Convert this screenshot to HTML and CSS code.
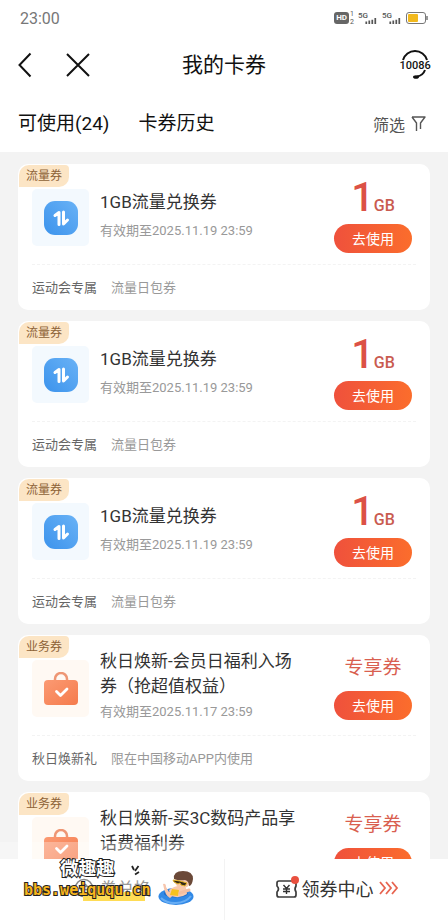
FILE: index.html
```html
<!DOCTYPE html>
<html lang="zh-CN">
<head>
<meta charset="utf-8">
<meta name="viewport" content="width=device-width, initial-scale=1">
<title>我的卡券</title>
<link rel="stylesheet" href="styles.css">
</head>
<body>
<svg class="defs" aria-hidden="true">
  <defs>
    <linearGradient id="blue" x1="1" y1="0" x2="0" y2="1"><stop offset="0" stop-color="#69b2f6"/><stop offset="1" stop-color="#3c93ec"/></linearGradient>
    <linearGradient id="orange" x1="0" y1="0" x2="1" y2="1"><stop offset="0" stop-color="#fb9a73"/><stop offset="1" stop-color="#f57b4c"/></linearGradient>
    <symbol id="data" viewBox="0 0 34 34">
      <rect width="34" height="34" rx="11" fill="url(#blue)"/>
      <path d="M11 14.500 15 11.500v12M19.500 11v12l4-4" fill="none" stroke="#fff" stroke-width="3" stroke-linejoin="round" stroke-linecap="round"/>
    </symbol>
    <symbol id="bag" viewBox="0 0 34 34">
      <path d="M11 9V7a6 6 0 0 1 12 0v2" fill="none" stroke="#ee9674" stroke-width="2.500"/>
      <rect y="8" width="34" height="25" rx="4" fill="url(#orange)"/>
      <path d="m12.500 19.500 4 4 6.500-6.500" fill="none" stroke="#fff" stroke-width="2.800" stroke-linecap="round" stroke-linejoin="round"/>
    </symbol>
    <symbol id="signal" viewBox="0 0 14 7">
      <path d="M1.500 7V4M5 7V3M8.500 7V2M12 7V0" stroke="#555" stroke-width="2"/>
    </symbol>
  </defs>
</svg>
<div class="app">
  <header class="top">
    <div class="status">
      <span class="clock">23:00</span>
      <span class="indicators">
        <span class="hd">HD</span>
        <span class="sims"><span>1</span><span>2</span></span>
        <span class="net"><span>5G</span><svg><use href="#signal"/></svg></span>
        <span class="net"><span>5G</span><svg><use href="#signal"/></svg></span>
        <svg class="battery" viewBox="0 0 22 12"><rect x="0.500" y="0.500" width="19" height="11" rx="2.500" fill="#fff" stroke="#777"/><rect x="2" y="2" width="10" height="8" rx="1" fill="#f2b91d"/><path d="M21 4v4" stroke="#777" stroke-width="1.500"/></svg>
      </span>
    </div>
    <div class="nav">
      <div class="nav-left">
        <button class="icon-btn" aria-label="返回"><svg width="14" height="26" viewBox="0 0 14 26"><path d="M12.500 1.500 1.500 13l11 11.500"/></svg></button>
        <button class="icon-btn" aria-label="关闭"><svg width="24" height="24" viewBox="0 0 24 24"><path d="m1 1 22 22M23 1 1 23"/></svg></button>
      </div>
      <h1>我的卡券</h1>
      <button class="service" aria-label="客服 10086">
        <svg viewBox="0 0 30 30"><path d="M3 10a12.500 12.500 0 0 1 24 0M25 20a10 10 0 0 1-8 6.500" fill="none" stroke="#111" stroke-width="2"/><ellipse cx="16" cy="27" rx="3" ry="1.800" fill="#111"/></svg>
        <span>10086</span>
      </button>
    </div>
    <nav class="tabs">
      <a href="#usable" class="tab">可使用(24)</a>
      <a href="#history" class="tab">卡券历史</a>
      <button class="filter">筛选<svg width="15" height="16" viewBox="0 0 15 16"><path d="M1 1h13L9.500 7v6M1 1l4.500 6v8" fill="none" stroke="#555" stroke-width="1.400" stroke-linejoin="round"/></svg></button>
    </nav>
  </header>

  <main class="list" id="usable">
    <article class="card">
      <span class="tag">流量券</span>
      <div class="body">
        <span class="thumb thumb-data"><svg><use href="#data"/></svg></span>
        <div class="info"><h2>1GB流量兑换券</h2><p>有效期至2025.11.19 23:59</p></div>
        <div class="action"><strong class="amount">1<small>GB</small></strong><button class="use">去使用</button></div>
      </div>
      <div class="foot"><span class="label">运动会专属</span><span>流量日包券</span></div>
    </article>
    <article class="card">
      <span class="tag">流量券</span>
      <div class="body">
        <span class="thumb thumb-data"><svg><use href="#data"/></svg></span>
        <div class="info"><h2>1GB流量兑换券</h2><p>有效期至2025.11.19 23:59</p></div>
        <div class="action"><strong class="amount">1<small>GB</small></strong><button class="use">去使用</button></div>
      </div>
      <div class="foot"><span class="label">运动会专属</span><span>流量日包券</span></div>
    </article>
    <article class="card">
      <span class="tag">流量券</span>
      <div class="body">
        <span class="thumb thumb-data"><svg><use href="#data"/></svg></span>
        <div class="info"><h2>1GB流量兑换券</h2><p>有效期至2025.11.19 23:59</p></div>
        <div class="action"><strong class="amount">1<small>GB</small></strong><button class="use">去使用</button></div>
      </div>
      <div class="foot"><span class="label">运动会专属</span><span>流量日包券</span></div>
    </article>
    <article class="card card-service">
      <span class="tag">业务券</span>
      <div class="body">
        <span class="thumb thumb-bag"><svg><use href="#bag"/></svg></span>
        <div class="info"><h2>秋日焕新-会员日福利入场券（抢超值权益）</h2><p>有效期至2025.11.17 23:59</p></div>
        <div class="action"><strong class="kind">专享券</strong><button class="use">去使用</button></div>
      </div>
      <div class="foot"><span class="label">秋日焕新礼</span><span>限在中国移动APP内使用</span></div>
    </article>
    <article class="card card-service">
      <span class="tag">业务券</span>
      <div class="body">
        <span class="thumb thumb-bag"><svg><use href="#bag"/></svg></span>
        <div class="info"><h2>秋日焕新-买3C数码产品享话费福利券</h2></div>
        <div class="action"><strong class="kind">专享券</strong><button class="use">去使用</button></div>
      </div>
    </article>
    <div class="veil"></div>
  </main>

  <footer class="bar">
    <a class="bar-item exchange" href="#exchange">
      <svg class="coin" viewBox="0 0 20 20"><circle cx="10" cy="10" r="8.500" fill="none" stroke="#888" stroke-width="1.600"/><path d="M6.500 8.500h7l-2.500-2.500M13.500 11.500h-7L9 14" fill="none" stroke="#888" stroke-width="1.400"/></svg>
      <span>券兑换</span>
      <svg class="spark" viewBox="0 0 9 11"><path d="m1 1 2 4M7.500 1 4 6M8 7 4 9.500" fill="none" stroke="#222" stroke-width="1.800"/></svg>
      <svg class="swimmer" viewBox="0 0 36 36">
        <ellipse cx="18" cy="26.500" rx="17.500" ry="8.500" fill="#3289e6"/>
        <path d="M3 28c7 7 23 7 30-2" fill="none" stroke="#67adf4" stroke-width="2"/>
        <ellipse cx="18" cy="23.500" rx="12" ry="4" fill="#1f6cc9"/>
        <path d="M11 20q9-7 17-2l1 6q-7 5-16 2z" fill="#f8c9ae"/>
        <path d="M5 14q3-1 3 3l3 5 4-3 3 4-6 5q-5-2-7-14z" fill="#f6c5ac"/>
        <path d="m14 19 7 1-1 6-8-1z" fill="#f6c21e"/>
        <circle cx="24.500" cy="11" r="7.500" fill="#f7c9ae"/>
        <path d="M16 9q-1-8 9-8 10 0 10 8-1 7-4 7 0-5-4-6-6 1-11-1z" fill="#6b4938"/>
        <path d="m15 10 7 1 7 2-2 3-4-1-1-2-2 1-4-2z" fill="#342a18" stroke="#e5b52a"/>
        <path d="m22 23 9-3" stroke="#f5bea0" stroke-width="3" stroke-linecap="round"/>
      </svg>
    </a>
    <a class="bar-item center" href="#center">
      <svg class="ticket" viewBox="0 0 24 24"><path d="M4 5h15a2 2 0 0 1 2 2v3q-2 3 0 6v3a2 2 0 0 1-2 2H4a2 2 0 0 1-2-2v-3q3-3 0-6V7a2 2 0 0 1 2-2z" fill="none" stroke="#3c3c3c" stroke-width="1.700"/><path d="m8.500 9 3 3.500 3-3.500M11.500 12.500V18M8 13h7M8 15.500h7" fill="none" stroke="#333" stroke-width="1.400"/><circle cx="20" cy="4" r="4" fill="#e9503f"/></svg>
      <span>领券中心</span>
      <svg class="arrows" viewBox="0 0 20 14"><path d="m1 1 5 6-5 6M7 1l5 6-5 6M13 1l5 6-5 6" fill="none" stroke="#e76450" stroke-width="1.800"/></svg>
    </a>
    <div class="stamp"><span class="stamp-name">微趣趣</span><span class="stamp-url">bbs.weiququ.cn</span></div>
  </footer>
</div>
</body>
</html>
```

FILE: styles.css
```css
* { box-sizing: border-box; }

body {
  margin: 0;
  background: #f3f3f3;
  color: #333;
  font-family: Roboto, "Noto Sans CJK SC", sans-serif;
}

h1, h2, p { margin: 0; font-weight: 400; }
a { color: inherit; text-decoration: none; }
button { border: 0; padding: 0; background: none; color: inherit; font: inherit; }
svg { display: block; flex: none; }
.defs { position: absolute; width: 0; height: 0; }

.app { display: flex; flex-direction: column; height: 100vh; overflow: hidden; }

/* Header */
.top { flex: none; background: #fff; padding-bottom: 10px; }

.status {
  display: flex;
  justify-content: space-between;
  align-items: center;
  height: 36px;
  padding: 0 20px;
  color: #777;
}
.clock { font-size: 16px; }
.indicators { display: flex; align-items: center; gap: 4px; color: #555; }
.hd {
  padding: 0 2px;
  border-radius: 3px;
  background: #666;
  color: #fff;
  font-size: 8px;
  font-weight: 700;
  line-height: 12px;
}
.sims { display: flex; flex-direction: column; margin-left: -3px; font-size: 7px; line-height: 8px; }
.net { display: flex; flex-direction: column; font-size: 8px; font-weight: 500; line-height: 7px; }
.net svg { width: 14px; height: 6px; margin: -1px 0 0 6px; }
.battery { width: 22px; height: 12px; }

.nav {
  display: grid;
  grid-template-columns: 1fr auto 1fr;
  align-items: center;
  height: 58px;
  padding: 0 18px;
  color: #111;
}
.nav-left { display: flex; align-items: center; gap: 34px; }
.icon-btn path { fill: none; stroke: #111; stroke-width: 2; }
.nav h1 { padding-bottom: 4px; font-size: 21px; }
.service { position: relative; justify-self: end; width: 30px; height: 30px; }
.service svg { width: 30px; height: 30px; }
.service span {
  position: absolute;
  inset: 0;
  display: flex;
  justify-content: center;
  align-items: center;
  font-size: 11px;
  font-weight: 500;
}

.tabs { display: flex; align-items: center; gap: 29px; height: 48px; padding: 12px 22px 0 18px; }
.tab { color: #111; font-size: 19px; line-height: 36px; }
.filter { display: flex; align-items: center; gap: 6px; margin-left: auto; color: #555; font-size: 16px; }

/* Coupons */
.list {
  position: relative;
  flex: 1;
  min-height: 0;
  display: flex;
  flex-direction: column;
  gap: 11px;
  padding: 12px 18px 0;
  overflow: hidden;
}
.card { position: relative; flex: none; padding: 0 14px; border-radius: 10px; background: #fff; }
.tag {
  position: absolute;
  top: 1px;
  left: 1px;
  padding: 0 7px;
  border-radius: 10px 4px 10px 0;
  background: #fce5c5;
  color: #8d6237;
  font-size: 12px;
  line-height: 22px;
}
.body {
  display: flex;
  align-items: flex-start;
  height: 101px;
  border-bottom: 1px dashed #f3f3f3;
}
.thumb {
  display: grid;
  place-items: center;
  flex: none;
  width: 57px;
  height: 57px;
  margin: 25px 11px 0 0;
  border-radius: 5px;
}
.thumb svg { width: 34px; height: 34px; }
.thumb-data { background: #f3f9fe; }
.thumb-bag { background: #fff9f3; }
.info { flex: 1; min-width: 0; padding-top: 26px; }
.info h2 { max-width: 204px; font-size: 17px; line-height: 25px; }
.info p { margin-top: 7px; color: #999; font-size: 13px; line-height: 18px; }
.action {
  display: flex;
  flex-direction: column;
  align-items: center;
  flex: none;
  width: 78px;
  margin-right: 4px;
  padding-top: 12px;
}
.amount {
  height: 48px;
  color: #dc5146;
  font-family: Roboto, sans-serif;
  font-size: 40px;
  font-weight: 500;
  line-height: 44px;
}
.amount small { color: #c95b50; font-size: 16px; }
.kind { height: 44px; color: #d95f50; font-size: 19px; font-weight: 400; line-height: 42px; }
.use {
  width: 78px;
  height: 29px;
  padding-bottom: 2px;
  border-radius: 15px;
  background: linear-gradient(90deg, #ef513c, #fb6d2c);
  color: #fff;
  font-size: 14px;
}
.foot { display: flex; align-items: center; gap: 14px; height: 45px; padding-bottom: 3px; color: #999; font-size: 13px; }
.foot .label { color: #666; }

.card-service .info { padding-top: 14px; }
.card-service .info p { margin-top: 4px; }

.veil {
  position: absolute;
  bottom: 0;
  left: 0;
  width: 50%;
  height: 17px;
  background: rgba(255, 255, 255, 0.3);
}

/* Bottom bar */
.bar {
  position: relative;
  flex: none;
  display: grid;
  grid-template-columns: minmax(0, 1fr) minmax(0, 1fr);
  height: 61px;
  background: #fff;
}
.bar-item { display: flex; align-items: center; justify-content: center; padding-bottom: 4px; font-size: 18px; }
.exchange { justify-content: flex-start; padding-left: 74px; gap: 6px; color: #999; font-size: 17px; }
.exchange span { flex: none; }
.exchange::after {
  content: "";
  position: absolute;
  left: 83px;
  top: 33px;
  width: 62px;
  height: 9px;
  background: #ffdc55;
}
.coin { width: 20px; height: 20px; }
.spark { width: 9px; height: 11px; margin: 0 0 34px -26px; }
.swimmer { width: 36px; height: 36px; margin-left: 12px; }
.center { border-left: 1px solid #f3f3f3; gap: 3px; }
.ticket { width: 24px; height: 24px; }
.arrows { width: 20px; height: 14px; margin-left: 2px; }

.stamp { position: absolute; left: 24px; top: 0; display: flex; flex-direction: column; align-items: center; }
.stamp span { -webkit-text-stroke: 2px #222; paint-order: stroke fill; }
.stamp-name { color: #fff; font-size: 18px; font-weight: 700; line-height: 20px; }
.stamp-url { color: #f7b51d; font-family: "DejaVu Sans Mono", monospace; font-size: 15px; font-weight: 700; line-height: 22px; }
```
